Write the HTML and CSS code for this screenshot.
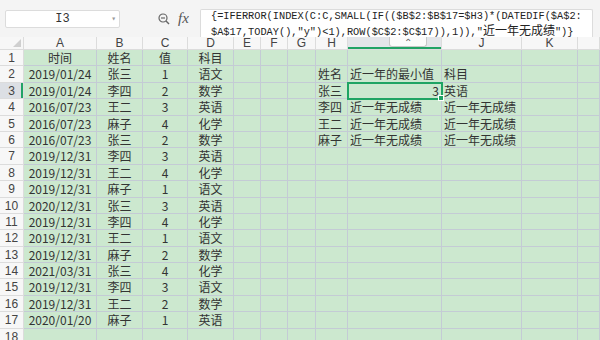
FILE: index.html
```
<!DOCTYPE html>
<html>
<head>
    <title>成绩表</title>
    <link rel="stylesheet" href="styles.css">
</head>

<body>
    <div id="bar">
        <div class="namebox">I3<span class="caret">▾</span></div>
        <svg class="zoom-icon" width="12" height="12" viewBox="0 0 12 12">
            <circle cx="5" cy="5" r="4" fill="none" stroke="#666" stroke-width="1.2"/>
            <line x1="3" y1="5" x2="7" y2="5" stroke="#666" stroke-width="1.2"/>
            <line x1="8" y1="8" x2="11" y2="11" stroke="#666" stroke-width="1.4"/>
        </svg>
        <div class="fx">fx</div>
        <div class="formula">{=IFERROR(INDEX(C:C,SMALL(IF(($B$2:$B$17=$H3)*(DATEDIF($A$2:<br>$A$17,TODAY(),"y")&lt;1),ROW($C$2:$C$17)),1)),"<span class="cjk">近一年无成绩</span>")}</div>
    </div>
    <div id="sheet"></div>
    <script>
        const cols = ['', 'A', 'B', 'C', 'D', 'E', 'F', 'G', 'H', 'I', 'J', 'K', '']

        const data = [
            ['时间', '姓名', '值', '科目'],
            ['2019/01/24', '张三', '1', '语文'],
            ['2019/01/24', '李四', '2', '数学'],
            ['2016/07/23', '王二', '3', '英语'],
            ['2016/07/23', '麻子', '4', '化学'],
            ['2016/07/23', '张三', '2', '数学'],
            ['2019/12/31', '李四', '3', '英语'],
            ['2019/12/31', '王二', '4', '化学'],
            ['2019/12/31', '麻子', '1', '语文'],
            ['2020/12/31', '张三', '3', '英语'],
            ['2019/12/31', '李四', '4', '化学'],
            ['2019/12/31', '王二', '1', '语文'],
            ['2019/12/31', '麻子', '2', '数学'],
            ['2021/03/31', '张三', '4', '化学'],
            ['2019/12/31', '李四', '3', '语文'],
            ['2019/12/31', '王二', '2', '数学'],
            ['2020/01/20', '麻子', '1', '英语'],
            ['', '', '', '']
        ]

        const side = {
            2: ['姓名', '近一年的最小值', '科目'],
            3: ['张三', '3', '英语'],
            4: ['李四', '近一年无成绩', '近一年无成绩'],
            5: ['王二', '近一年无成绩', '近一年无成绩'],
            6: ['麻子', '近一年无成绩', '近一年无成绩']
        }

        const cell = (cls, text) => {
            const d = document.createElement('div')
            d.className = cls
            d.textContent = text
            return d
        }

        const out = []
        cols.forEach((c, i) => {
            const h = cell(i == 0 ? 'head corner' : 'head', c)
            if (c == 'I') {
                h.classList.add('sel')
                h.textContent = ''
                h.appendChild(cell('fold', '⌃'))
            }
            out.push(h)
        })

        data.forEach((row, r) => {
            const n = r + 1
            out.push(cell(n == 3 ? 'rownum sel' : 'rownum', n))
            row.forEach(v => out.push(cell('c mid', v)))
            out.push(cell('c', ''), cell('c', ''), cell('c', ''))
            const s = side[n] || ['', '', '']
            out.push(cell('c', s[0]))
            out.push(cell(n == 3 ? 'c right active' : 'c', s[1]))
            out.push(cell('c', s[2]))
            out.push(cell('c', ''), cell('c', ''))
        })

        document.getElementById('sheet').replaceChildren(...out)
    </script>
</body>
</html>
```

FILE: styles.css
```
body {
    margin: 0;
    width: 600px;
    height: 340px;
    overflow: hidden;
    background-color: #f4f4f4;
    font-family: "Noto Sans CJK SC", sans-serif;
    color: #333;
}

#bar {
    display: flex;
    align-items: flex-start;
    height: 37px;
    box-sizing: border-box;
    padding: 9px 7px 0 5px;
}

.namebox {
    position: relative;
    box-sizing: border-box;
    width: 115px;
    height: 18px;
    margin-top: 1px;
    background-color: white;
    border: 1px solid #dcdcdc;
    border-radius: 2px;
    font-family: "Liberation Mono", monospace;
    font-size: 12px;
    line-height: 16px;
    text-align: center;
}

.caret {
    position: absolute;
    right: 3px;
    top: 0;
    font-size: 8px;
    color: #999;
}

.zoom-icon {
    margin: 4px 0 0 38px;
}

.fx {
    margin: 1px 0 0 8px;
    width: 22px;
    font-family: "Liberation Serif", serif;
    font-style: italic;
    font-size: 15px;
    color: #555;
}

.formula {
    flex: 1;
    box-sizing: border-box;
    height: 28px;
    padding: 0 0 0 10px;
    background-color: white;
    border: 1px solid #dcdcdc;
    border-bottom: none;
    border-radius: 2px 2px 0 0;
    font-family: "Liberation Mono", monospace;
    font-size: 10.3px;
    line-height: 13.6px;
    white-space: nowrap;
    overflow: hidden;
    color: #222;
}

.formula .cjk {
    font-family: "Noto Sans CJK SC", sans-serif;
    font-size: 12px;
    line-height: 1;
}

#sheet {
    display: grid;
    grid-template-columns: 24px 73px 46px 45px 46px 27px 27px 28px 32px 94px 80px 56px 22px;
    grid-template-rows: 13px;
    grid-auto-rows: 16.4px;
    background-color: #cce8cf;
}

#sheet > div {
    box-sizing: border-box;
    border-right: 1px solid #c4cbd5;
    border-bottom: 1px solid #c4cbd5;
    white-space: nowrap;
    overflow: hidden;
}

.head {
    position: relative;
    background-color: #f7f7f7;
    border-color: #dcdcdc !important;
    font-family: "Liberation Sans", sans-serif;
    font-size: 12px;
    line-height: 12px;
    text-align: center;
    color: #444;
    overflow: visible !important;
}

.head.corner::after {
    content: "";
    position: absolute;
    right: 2px;
    bottom: 2px;
    border-style: solid;
    border-width: 0 0 8px 8px;
    border-color: transparent transparent #cfcfcf transparent;
}

.head.sel {
    background-color: #e3e5e9;
    box-shadow: inset 0 -2px 0 #21a366;
}

.fold {
    position: absolute;
    left: 41px;
    top: 0;
    box-sizing: border-box;
    width: 38px;
    height: 10px;
    background-color: #fbfbfb;
    border: 1px solid #c8c8c8;
    border-top: none;
    border-radius: 0 0 3px 3px;
    font-size: 10px;
    line-height: 12px;
    color: #666;
}

.rownum {
    background-color: #f7f7f7;
    border-color: #dcdcdc !important;
    font-family: "Liberation Sans", sans-serif;
    font-size: 12px;
    line-height: 16px;
    text-align: center;
    color: #444;
}

.rownum.sel {
    background-color: #dcdfe4;
    box-shadow: inset -2px 0 0 #21a366;
}

.c {
    position: relative;
    padding: 0 2px;
    font-size: 12px;
    line-height: 16px;
    overflow: visible !important;
}

.c.mid {
    text-align: center;
}

.c.right {
    text-align: right;
}

.c.active {
    outline: 2px solid #1fa463;
    outline-offset: -1px;
    z-index: 1;
}

.c.active::after {
    content: "";
    position: absolute;
    right: -3px;
    bottom: -3px;
    width: 4px;
    height: 4px;
    background-color: #1fa463;
    border: 1px solid white;
}
```
